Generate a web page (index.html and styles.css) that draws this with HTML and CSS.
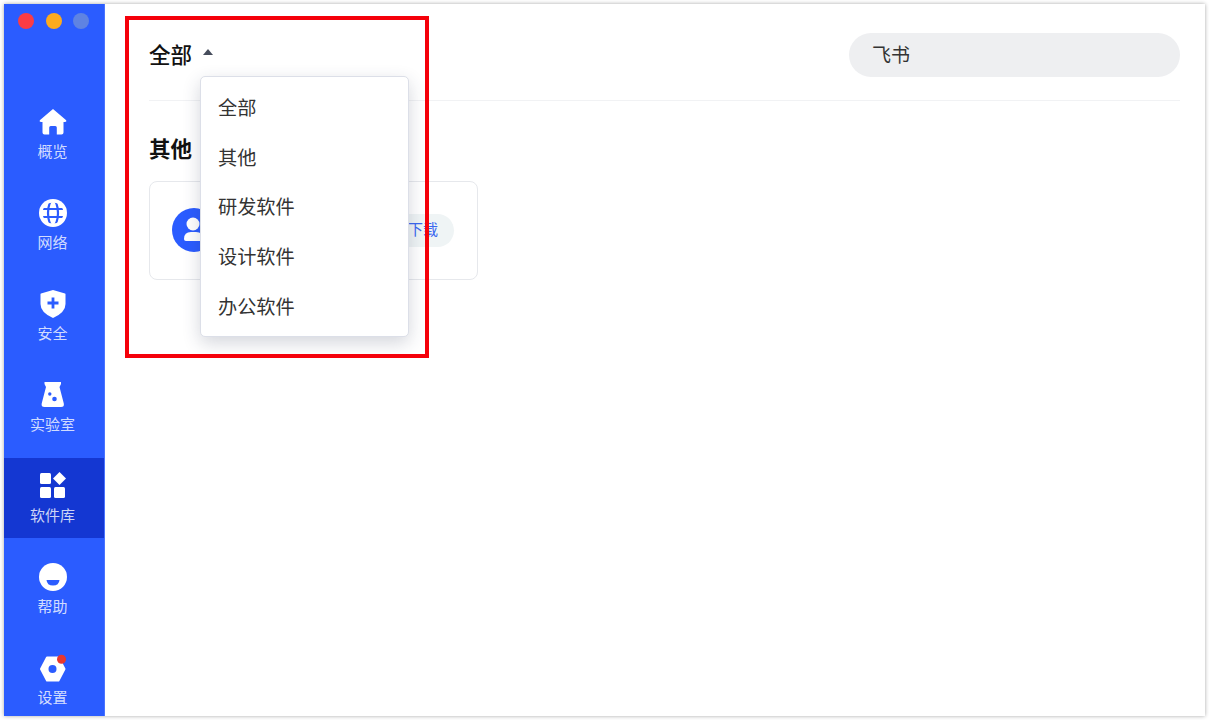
FILE: index.html
```html
<!DOCTYPE html>
<html lang="zh">
<head>
  <meta charset="UTF-8">
  <title>软件库</title>
  <link rel="stylesheet" href="styles.css">
</head>
<body>

<div class="window">
  <aside class="sidebar">
    <div class="traffic">
      <span class="dot dot-red"></span>
      <span class="dot dot-yellow"></span>
      <span class="dot dot-grey"></span>
    </div>
    <nav class="nav">
      <a class="nav-item">
        <svg class="nav-icon" viewBox="0 0 28 28"><path fill="#fff" d="M14 1 L27.2 12.3 Q28 14 26 14 H24.500 V24.500 Q24.500 26.500 22.500 26.500 H17.800 V19.500 Q17.800 18 16.300 18 H11.700 Q10.200 18 10.200 19.500 V26.500 H5.500 Q3.500 26.500 3.500 24.500 V14 H2 Q0 14 .8 12.300Z"/></svg>
        <span>概览</span>
      </a>
      <a class="nav-item">
        <svg class="nav-icon" viewBox="0 0 28 28">
          <circle cx="14" cy="14" r="14" fill="#fff"/>
          <clipPath id="globeClip"><circle cx="14" cy="14" r="10.500"/></clipPath>
          <g fill="none" stroke="#2b5cff" stroke-width="2.200" clip-path="url(#globeClip)">
            <ellipse cx="14" cy="14" rx="5" ry="13"/>
            <path d="M0 10H28M0 18H28"/>
          </g>
        </svg>
        <span>网络</span>
      </a>
      <a class="nav-item">
        <svg class="nav-icon" viewBox="0 0 28 28">
          <path fill="#fff" d="M14 0 L26 3.500 Q26.500 3.700 26.500 4.500 V14 Q26.500 22.500 14 28 Q1.500 22.500 1.500 14 V4.500 Q1.500 3.700 2 3.500Z"/>
          <path fill="none" stroke="#2b5cff" stroke-width="2.800" d="M14 7.500V18.500M8.500 13H19.500"/>
        </svg>
        <span>安全</span>
      </a>
      <a class="nav-item">
        <svg class="nav-icon" viewBox="0 0 28 28">
          <path fill="#fff" d="M5.500 1 H22 V3 L20.500 6 L24.800 22.500 Q25.500 26 22 26 H5.500 Q2 26 2.700 22.500 L7 6 L5.500 3 Z"/>
          <circle cx="10.800" cy="13" r="1.700" fill="#2b5cff"/>
          <circle cx="15.500" cy="18" r="2.300" fill="#2b5cff"/>
        </svg>
        <span>实验室</span>
      </a>
      <a class="nav-item active">
        <svg class="nav-icon" viewBox="0 0 28 28">
          <rect x="1" y="1" width="11" height="11" rx="1.500" fill="#fff"/>
          <rect x="1" y="15" width="11" height="11" rx="1.500" fill="#fff"/>
          <rect x="15" y="15" width="11" height="11" rx="1.500" fill="#fff"/>
          <path fill="#fff" d="M20.500 0 L27 6.500 L20.500 13 L14 6.500Z"/>
        </svg>
        <span>软件库</span>
      </a>
      <a class="nav-item">
        <svg class="nav-icon" viewBox="0 0 28 28">
          <circle cx="14" cy="14" r="14" fill="#fff"/>
          <path fill="#2b5cff" d="M7.500 17 H20.500 Q20 22.500 14 22.500 Q8 22.500 7.500 17Z"/>
        </svg>
        <span>帮助</span>
      </a>
      <a class="nav-item">
        <svg class="nav-icon" viewBox="0 0 28 28">
          <path fill="#fff" stroke="#fff" stroke-width="2" stroke-linejoin="round" d="M8 3.500 H19.500 L25.500 15 L19.500 26.500 H8 L2 15Z"/>
          <circle cx="13.500" cy="15" r="4" fill="#2b5cff"/>
          <circle cx="22.500" cy="5.300" r="4.500" fill="#e8372e"/>
        </svg>
        <span>设置</span>
      </a>
    </nav>
  </aside>

  <main class="main">
    <header class="header">
      <div class="filter">
        <span class="filter-label">全部</span>
        <span class="filter-arrow"></span>
      </div>
      <div class="search">飞书</div>
    </header>

    <section class="section">
      <h2 class="section-title">其他</h2>
      <div class="card">
        <svg class="card-logo" viewBox="0 0 44 44">
          <circle cx="22" cy="22" r="22" fill="#2b5cff"/>
          <circle cx="21" cy="16" r="6.500" fill="#fff"/>
          <path fill="#fff" d="M12 31 Q12 24 19 24 H24 Q31 24 31 31 Q31 33 29 33 H14 Q12 33 12 31Z"/>
        </svg>
        <button class="btn-download">下载</button>
      </div>
    </section>

    <ul class="menu">
      <li>全部</li>
      <li>其他</li>
      <li>研发软件</li>
      <li>设计软件</li>
      <li>办公软件</li>
    </ul>
  </main>
</div>

<div class="highlight-box"></div>

</body>
</html>
```

FILE: styles.css
```css
body {
  margin: 0;
  padding: 4px;
  background: #fff;
  font-family: "Noto Sans CJK SC", "Liberation Sans", sans-serif;
  overflow: hidden;
}

.window {
  display: flex;
  width: 1201px;
  height: 712px;
  background: #fff;
  box-shadow: 0 0 4px rgba(0,0,0,0.35);
  position: relative;
}

/* sidebar */

.sidebar {
  width: 101px;
  flex-shrink: 0;
  background: #2b5cff;
  box-sizing: border-box;
  border-right: 1px solid #4a73ff;
}

.traffic {
  display: flex;
  gap: 11.500px;
  padding: 9px 0 0 14px;
}

.dot {
  width: 16px;
  height: 16px;
  border-radius: 50%;
}

.dot-red { background: #fb3c44; }
.dot-yellow { background: #fdab1d; }
.dot-grey { background: #5f83e2; }

.nav {
  display: flex;
  flex-direction: column;
  gap: 11px;
  margin-top: 65px;
}

.nav-item {
  display: flex;
  flex-direction: column;
  align-items: center;
  height: 80px;
  box-sizing: border-box;
  padding: 14px 3px 0 0;
  color: rgba(255,255,255,0.8);
  font-size: 15px;
  line-height: 20px;
}

.nav-item.active {
  background: #1437d2;
}

.nav-icon {
  width: 28px;
  height: 28px;
  margin-bottom: 4.500px;
  overflow: visible;
}

/* content */

.main {
  flex: 1;
  padding: 0 25px 0 44px;
  position: relative;
}

.header {
  display: flex;
  align-items: center;
  justify-content: space-between;
  height: 97px;
  box-sizing: border-box;
  padding-top: 6px;
  border-bottom: 1px solid #f1f2f4;
}

.filter {
  display: flex;
  align-items: center;
  gap: 11px;
}

.filter-label {
  margin-bottom: 3px;
  font-size: 21.500px;
  font-weight: 500;
  color: #111;
}

.filter-arrow {
  width: 0;
  height: 0;
  margin-bottom: 7px;
  border-left: 5.500px solid transparent;
  border-right: 5.500px solid transparent;
  border-bottom: 6px solid #464d5c;
}

.search {
  width: 331px;
  height: 44px;
  box-sizing: border-box;
  padding-left: 23px;
  border-radius: 22px;
  background: #eeeff1;
  color: #333;
  font-size: 19px;
  line-height: 42px;
}

.section-title {
  margin: 32px 0 18px;
  font-size: 21.500px;
  font-weight: 700;
  line-height: 30px;
  color: #111;
}

.card {
  display: flex;
  align-items: center;
  justify-content: space-between;
  width: 329px;
  height: 99px;
  box-sizing: border-box;
  padding: 0 23px 2px 22px;
  border: 1px solid #e6e8ec;
  border-radius: 8px;
}

.card-logo {
  width: 44px;
  height: 44px;
}

.btn-download {
  width: 64px;
  height: 33px;
  margin-top: 2px;
  padding: 0 16px 4px 0;
  border: none;
  border-radius: 17px;
  background: #eff4f5;
  color: #3b68f0;
  font-family: inherit;
  font-size: 15px;
  text-align: right;
}

/* dropdown, lies over the card */

.menu {
  position: absolute;
  top: 72px;
  left: 95px;
  width: 209px;
  height: 261px;
  box-sizing: border-box;
  margin: 0;
  padding: 6px 0;
  list-style: none;
  background: #fff;
  border: 1px solid #dcdfe8;
  border-radius: 5px;
  box-shadow: 0 6px 18px rgba(40,50,80,0.2);
}

.menu li {
  height: 49.700px;
  padding-left: 17px;
  font-size: 19.200px;
  line-height: 49.700px;
  color: #333;
}

/* red annotation frame */

.highlight-box {
  position: absolute;
  left: 125px;
  top: 16px;
  width: 304px;
  height: 342px;
  box-sizing: border-box;
  border: 4px solid #f5000a;
}
```
